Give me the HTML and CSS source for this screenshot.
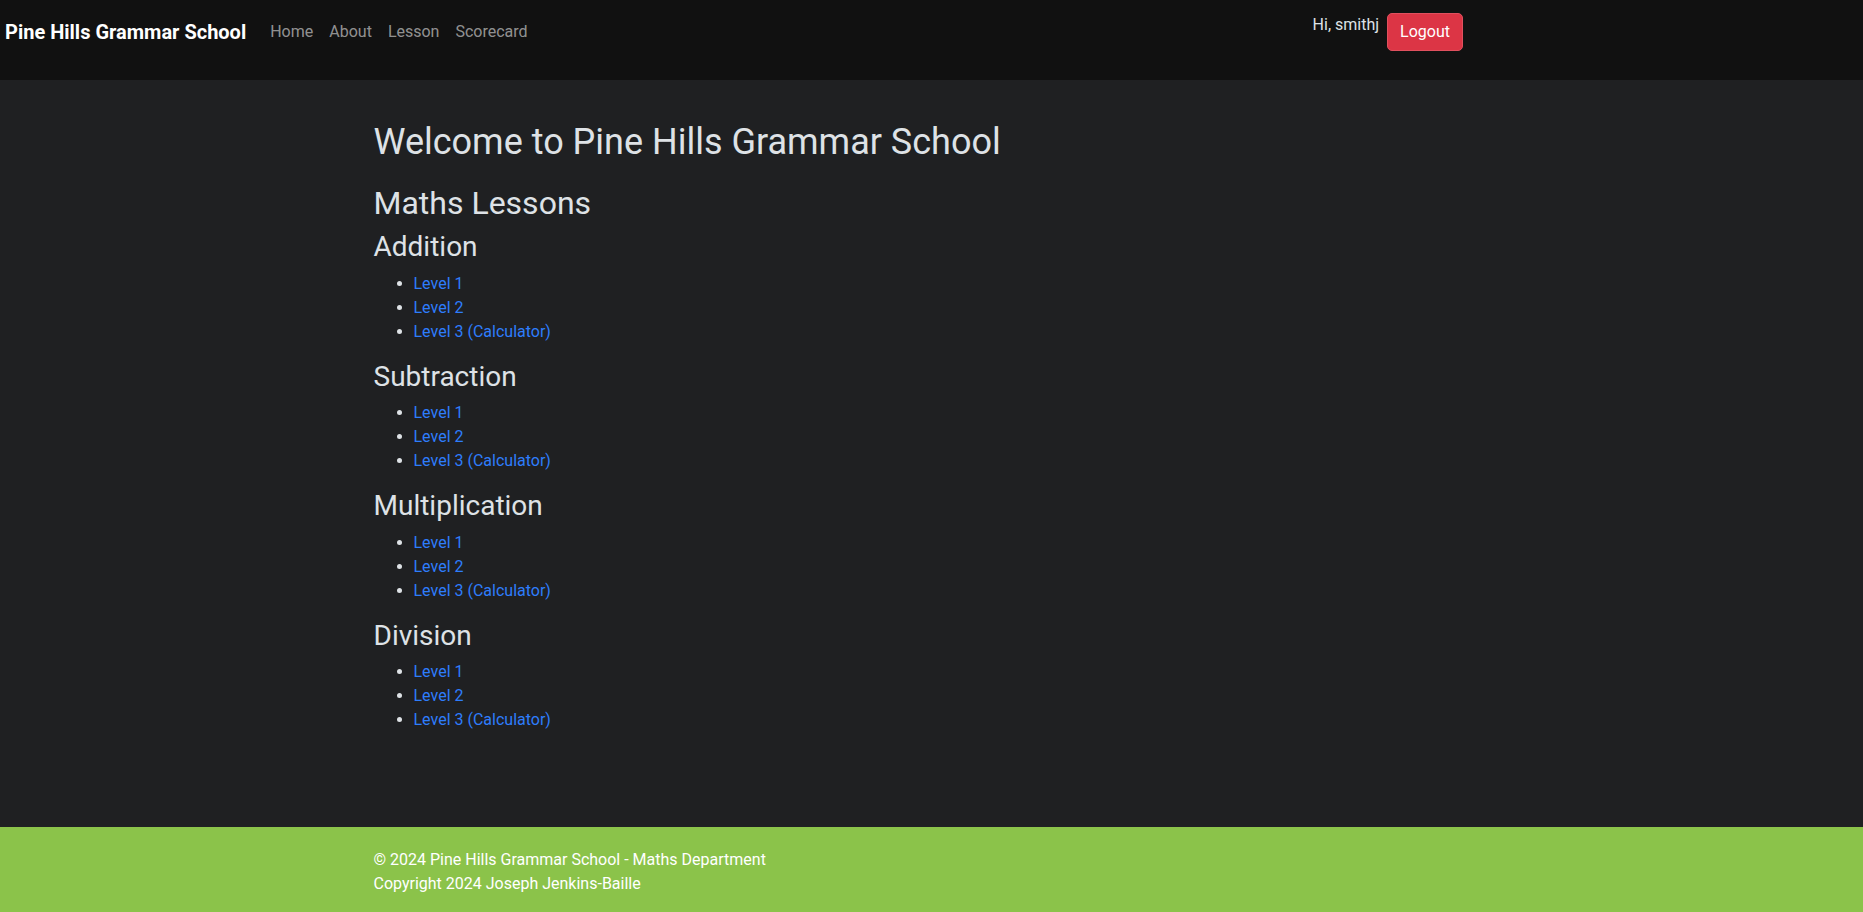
FILE: index.html
```html
<!DOCTYPE html>
<html lang="en">
<head>
<meta charset="utf-8">
<title>Pine Hills Grammar School</title>
<link rel="stylesheet" href="styles.css">
</head>
<body>
<div class="page">
  <nav class="navbar">
    <a class="brand" href="#">Pine Hills Grammar School</a>
    <ul class="nav-links">
      <li><a href="#">Home</a></li>
      <li><a href="#">About</a></li>
      <li><a href="#">Lesson</a></li>
      <li><a href="#">Scorecard</a></li>
    </ul>
    <div class="user">
      <span class="greeting">Hi, smithj</span>
      <button class="btn-logout" type="button">Logout</button>
    </div>
  </nav>

  <main class="container main">
    <h1 class="title">Welcome to Pine Hills Grammar School</h1>
    <h2 class="subtitle">Maths Lessons</h2>

    <h3 class="topic">Addition</h3>
    <ul class="levels">
      <li><a href="#">Level 1</a></li>
      <li><a href="#">Level 2</a></li>
      <li><a href="#">Level 3 (Calculator)</a></li>
    </ul>

    <h3 class="topic">Subtraction</h3>
    <ul class="levels">
      <li><a href="#">Level 1</a></li>
      <li><a href="#">Level 2</a></li>
      <li><a href="#">Level 3 (Calculator)</a></li>
    </ul>

    <h3 class="topic">Multiplication</h3>
    <ul class="levels">
      <li><a href="#">Level 1</a></li>
      <li><a href="#">Level 2</a></li>
      <li><a href="#">Level 3 (Calculator)</a></li>
    </ul>

    <h3 class="topic">Division</h3>
    <ul class="levels">
      <li><a href="#">Level 1</a></li>
      <li><a href="#">Level 2</a></li>
      <li><a href="#">Level 3 (Calculator)</a></li>
    </ul>
  </main>

  <footer class="footer">
    <div class="container">
      <p class="footer-line">&copy; 2024 Pine Hills Grammar School - Maths Department</p>
      <p class="footer-line">Copyright 2024 Joseph Jenkins-Baille</p>
    </div>
  </footer>
</div>
</body>
</html>
```

FILE: styles.css
```css
* {
  box-sizing: border-box;
}

html, body {
  margin: 0;
  padding: 0;
}

body {
  font-family: Roboto, "Liberation Sans", sans-serif;
  font-size: 16px;
  line-height: 1.5;
  color: #dee2e6;
  background: #1f2022;
}

.page {
  min-height: 100vh;
  display: flex;
  flex-direction: column;
}

a {
  text-decoration: none;
}

/* Navbar */
.navbar {
  height: 80px;
  background: #111111;
  display: flex;
  align-items: flex-start;
  padding: 12px 400px 0 5px;
}

.brand {
  font-size: 20px;
  line-height: 30px;
  font-weight: 700;
  color: #ffffff;
  padding-top: 5px;
  margin-right: 16px;
}

.nav-links {
  list-style: none;
  margin: 0;
  padding: 0;
  display: flex;
}

.nav-links a {
  display: block;
  padding: 8px;
  line-height: 24px;
  color: rgba(255, 255, 255, 0.55);
}

.user {
  margin-left: auto;
  margin-top: 1px;
  display: flex;
  align-items: flex-start;
  gap: 8px;
}

.greeting {
  line-height: 24px;
  color: #dee2e6;
}

.btn-logout {
  font-family: inherit;
  font-size: 16px;
  line-height: 24px;
  color: #ffffff;
  background: #dc3545;
  border: 1px solid #e0505e;
  border-radius: 5px;
  padding: 6px 12px;
  cursor: pointer;
}

/* Main */
.container {
  width: 100%;
  max-width: 1140px;
  margin: 0 auto;
  padding: 0 12px;
}

.main {
  padding-top: 41px;
  padding-bottom: 40px;
}

.title {
  font-size: 36px;
  line-height: 1.2;
  font-weight: 400;
  color: #dee2e6;
  margin: 0 0 19.5px;
}

.subtitle {
  font-size: 32px;
  line-height: 1.2;
  font-weight: 400;
  color: #dee2e6;
  margin: 0 0 8px;
}

.topic {
  font-size: 28px;
  line-height: 1.2;
  font-weight: 400;
  color: #dee2e6;
  margin: 0 0 8px;
}

.levels {
  margin: 0 0 16px;
  padding-left: 40px;
}

.levels a {
  color: #2e7dfc;
}

/* Footer */
.footer {
  margin-top: auto;
  background: #8bc34a;
  color: #ffffff;
  padding: 21px 0 16px;
}

.footer-line {
  margin: 0;
  line-height: 24px;
}
```
